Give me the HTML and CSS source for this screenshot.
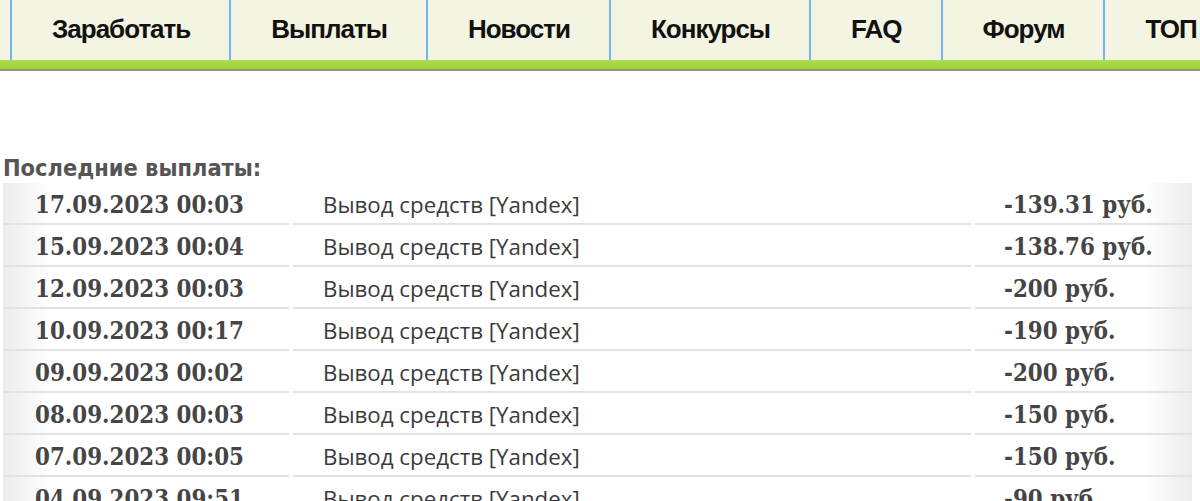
FILE: index.html
```html
<!DOCTYPE html>
<html lang="ru">
<head>
<meta charset="utf-8">
<title>Последние выплаты</title>
<link rel="stylesheet" href="styles.css">
</head>
<body>
<header class="topbar">
  <nav class="menu">
    <a class="menu-item" href="#">Заработать</a>
    <a class="menu-item" href="#">Выплаты</a>
    <a class="menu-item" href="#">Новости</a>
    <a class="menu-item" href="#">Конкурсы</a>
    <a class="menu-item" href="#">FAQ</a>
    <a class="menu-item" href="#">Форум</a>
    <a class="menu-item" href="#">ТОП</a>
  </nav>
  <div class="stripe"></div>
</header>
<main class="content">
  <h2 class="title">Последние выплаты:</h2>
  <div class="payouts">
    <div class="row"><div class="cell date">17.09.2023 00:03</div><div class="cell desc">Вывод средств [Yandex]</div><div class="cell sum">-139.31 руб.</div></div>
    <div class="row"><div class="cell date">15.09.2023 00:04</div><div class="cell desc">Вывод средств [Yandex]</div><div class="cell sum">-138.76 руб.</div></div>
    <div class="row"><div class="cell date">12.09.2023 00:03</div><div class="cell desc">Вывод средств [Yandex]</div><div class="cell sum">-200 руб.</div></div>
    <div class="row"><div class="cell date">10.09.2023 00:17</div><div class="cell desc">Вывод средств [Yandex]</div><div class="cell sum">-190 руб.</div></div>
    <div class="row"><div class="cell date">09.09.2023 00:02</div><div class="cell desc">Вывод средств [Yandex]</div><div class="cell sum">-200 руб.</div></div>
    <div class="row"><div class="cell date">08.09.2023 00:03</div><div class="cell desc">Вывод средств [Yandex]</div><div class="cell sum">-150 руб.</div></div>
    <div class="row"><div class="cell date">07.09.2023 00:05</div><div class="cell desc">Вывод средств [Yandex]</div><div class="cell sum">-150 руб.</div></div>
    <div class="row"><div class="cell date">04.09.2023 09:51</div><div class="cell desc">Вывод средств [Yandex]</div><div class="cell sum">-90 руб.</div></div>
  </div>
</main>
</body>
</html>
```
FILE: styles.css
```css
html {
  overflow: hidden;
}
body {
  margin: 0;
  background: #ffffff;
  font-family: "Liberation Sans", Arial, sans-serif;
}
.topbar {
  width: 100%;
}
.menu {
  display: flex;
  height: 60px;
  padding-left: 10px;
  background: #f3f4e1;
  white-space: nowrap;
  overflow: hidden;
}
.menu-item {
  display: flex;
  align-items: center;
  flex: none;
  padding: 0 39px 2px 40px;
  border-left: 2px solid #72b4ee;
  color: #111111;
  text-decoration: none;
  font-family: "Liberation Sans", Arial, sans-serif;
  font-weight: bold;
  font-size: 26px;
  letter-spacing: -1px;
}
.stripe {
  height: 9px;
  background: linear-gradient(#abdc55, #9fcf4a);
  border-bottom: 2px solid #8c8e9e;
}
.content {
  padding: 84px 0 0 3px;
}
.title {
  margin: 0 0 2px 0;
  font-family: "DejaVu Sans Condensed", "DejaVu Sans", sans-serif;
  font-weight: bold;
  font-size: 23.4px;
  line-height: 26px;
  color: #555555;
}
.payouts {
  display: flex;
  flex-direction: column;
}
.row {
  display: grid;
  grid-template-columns: 286px 678px 217px;
  column-gap: 4px;
}
.cell {
  box-sizing: border-box;
  height: 42px;
  padding-top: 3px;
  display: flex;
  align-items: center;
  border-bottom: 2px solid #e2e2e2;
  white-space: nowrap;
}
.date {
  padding-left: 32px;
  background: linear-gradient(to right, #ececec 0, #ffffff 48px);
  font-family: "DejaVu Serif Condensed", "DejaVu Serif", serif;
  font-weight: bold;
  font-size: 23.8px;
  color: #454545;
}
.desc {
  padding-left: 30px;
  font-family: "Open Sans", "Noto Sans", sans-serif;
  font-size: 22.3px;
  color: #3a3a3a;
}
.sum {
  padding-left: 29px;
  background: linear-gradient(to left, #ececec 0, #ffffff 48px);
  font-family: "DejaVu Serif Condensed", "DejaVu Serif", serif;
  font-weight: bold;
  font-size: 23.8px;
  color: #454545;
}
```
